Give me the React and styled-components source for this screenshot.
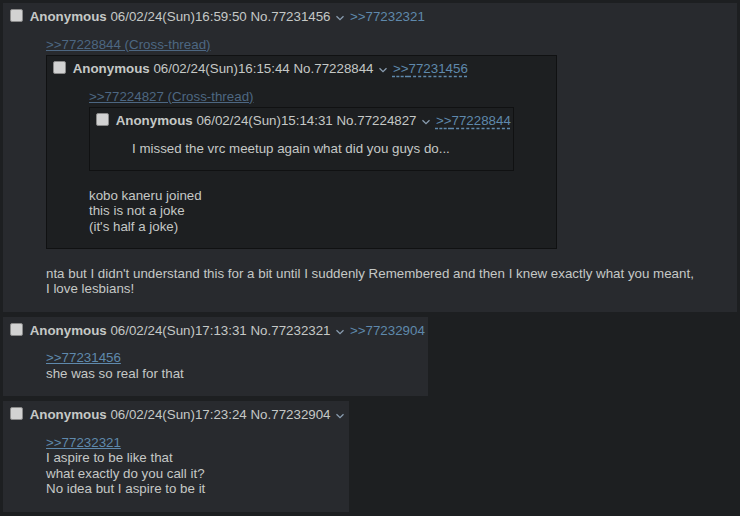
import React from "react";
import styled, { createGlobalStyle } from "styled-components";

const GlobalStyle = createGlobalStyle`
  body {
    margin: 0;
    background: #1d1f21;
    color: #c5c8c6;
    font-family: "Liberation Sans", Arial, sans-serif;
    font-size: 10pt;
    line-height: 15.5px;
  }
`;

const Thread = styled.div`
  padding: 3px;
`;

const Post = styled.div`
  display: table;
  background: #282a2e;
  border: 1px solid #282a2e;
  padding: 2px;
  margin-bottom: 5px;
`;

const Inline = styled.div`
  display: table;
  background: #1d1f21;
  border: 1px solid #101112;
  padding: 2px;
  margin: 3px 0 1px;
`;

const Header = styled.div`
  padding-top: 3px;
  white-space: nowrap;
`;

const Check = styled.span`
  display: inline-block;
  box-sizing: border-box;
  width: 13px;
  height: 13px;
  margin: 0 3px 0 4px;
  vertical-align: -1px;
  background: #d2d2d2;
  border: 1px solid #8a8a8a;
  border-radius: 2px;
`;

const Name = styled.span`
  font-weight: bold;
  color: #c5c8c6;
`;

const MenuButton = styled.svg`
  display: inline-block;
  width: 12px;
  height: 6px;
  vertical-align: 0;
`;

const BackLink = styled.a`
  color: #5f89ac;
  text-decoration: ${(p) => (p.$dashed ? "underline dashed" : "none")};
  text-underline-offset: 3px;
`;

const Message = styled.blockquote`
  margin: 12px 40px;
  white-space: nowrap;
`;

const QuoteLink = styled.a`
  color: ${(p) => (p.$inlined ? "#4d6782" : "#5f89ac")};
  text-decoration: underline;
`;

function Menu() {
  return (
    <MenuButton viewBox="0 0 12 6">
      <path d="M2.5 1.2 L6 4.6 L9.5 1.2" fill="none" stroke="#8a9db1" strokeWidth="1.3" />
    </MenuButton>
  );
}

function PostInfo({ date, no, backlink, dashed }) {
  return (
    <Header>
      <Check />{" "}
      <Name>Anonymous</Name> <span>{date}</span> <span>No.{no}</span> <Menu />
      {backlink && (
        <>
          {" "}
          <BackLink href="#" $dashed={dashed}>
            &gt;&gt;{backlink}
          </BackLink>
        </>
      )}
    </Header>
  );
}

export default function App() {
  return (
    <>
      <GlobalStyle />
      <Thread>
        <Post>
          <PostInfo date="06/02/24(Sun)16:59:50" no="77231456" backlink="77232321" />
          <Message>
            <QuoteLink href="#" $inlined>
              &gt;&gt;77228844 (Cross-thread)
            </QuoteLink>
            <Inline>
              <PostInfo date="06/02/24(Sun)16:15:44" no="77228844" backlink="77231456" dashed />
              <Message>
                <QuoteLink href="#" $inlined>
                  &gt;&gt;77224827 (Cross-thread)
                </QuoteLink>
                <Inline>
                  <PostInfo date="06/02/24(Sun)15:14:31" no="77224827" backlink="77228844" dashed />
                  <Message>I missed the vrc meetup again what did you guys do...</Message>
                </Inline>
                <br />
                kobo kaneru joined
                <br />
                this is not a joke
                <br />
                (it's half a joke)
              </Message>
            </Inline>
            <br />
            nta but I didn't understand this for a bit until I suddenly Remembered and then I knew exactly what you meant,
            <br />
            I love lesbians!
          </Message>
        </Post>

        <Post>
          <PostInfo date="06/02/24(Sun)17:13:31" no="77232321" backlink="77232904" />
          <Message>
            <QuoteLink href="#">&gt;&gt;77231456</QuoteLink>
            <br />
            she was so real for that
          </Message>
        </Post>

        <Post>
          <PostInfo date="06/02/24(Sun)17:23:24" no="77232904" />
          <Message>
            <QuoteLink href="#">&gt;&gt;77232321</QuoteLink>
            <br />
            I aspire to be like that
            <br />
            what exactly do you call it?
            <br />
            No idea but I aspire to be it
          </Message>
        </Post>
      </Thread>
    </>
  );
}
